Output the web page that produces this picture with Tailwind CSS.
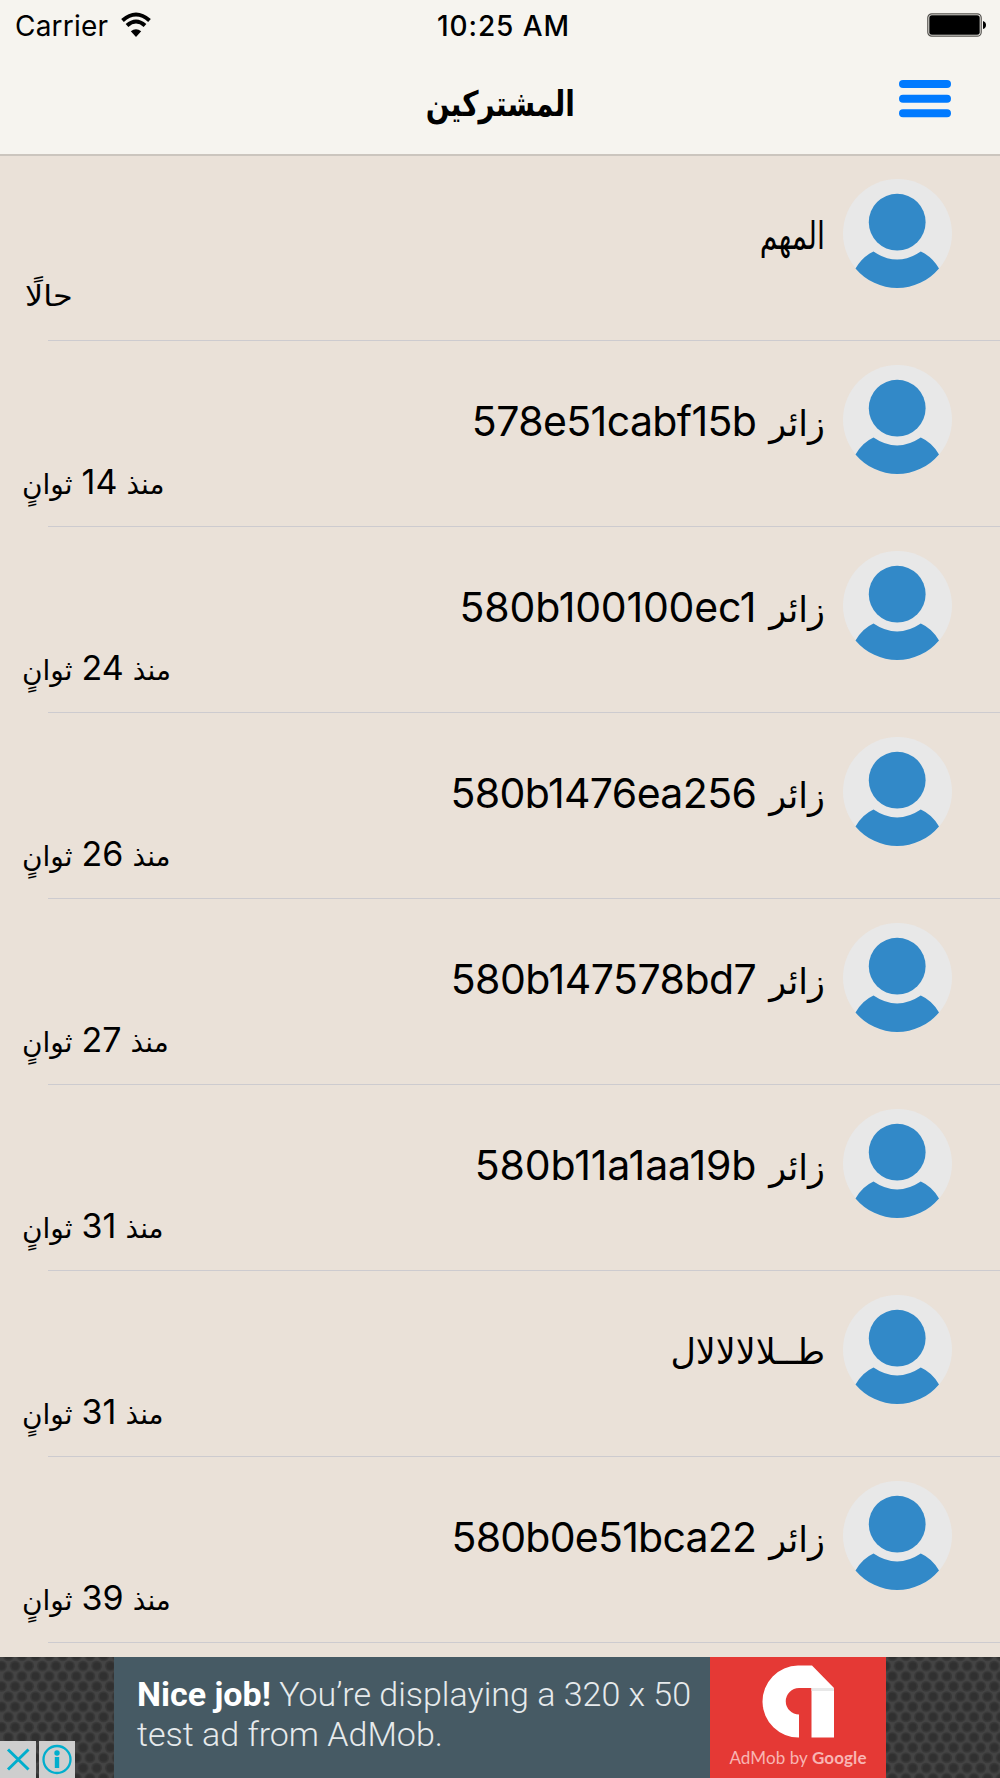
<!DOCTYPE html>
<html lang="ar">
<head>
    <meta charset="UTF-8">
    <meta name="viewport" content="width=device-width, initial-scale=1.0">
    <title>المشتركين</title>
    <script src="https://cdn.jsdelivr.net/npm/@tailwindcss/browser@4"></script>
</head>
<body class="bg-[#eae1d8] text-black font-['Inter','DejaVu_Sans',sans-serif]">
<div class="w-[1000px] h-[1778px] flex flex-col overflow-hidden">

    <!-- Status bar + navigation bar -->
    <header class="h-[156px] shrink-0 bg-[#f6f4ef] border-b-2 border-[#cbc5be]">
        <div class="h-[50px] grid grid-cols-3 items-center pl-[15px] pr-[13px] text-[28px]">
            <div class="flex items-center gap-[13px]">
                <span class="mt-[2px] tracking-[0.2px]">Carrier</span>
                <svg class="w-[30px] h-[25px] -mt-[2px]" viewBox="0 0 30 25">
                    <path d="M1.500 8.500Q15-3.500 28.500 8.500" fill="none" stroke="#000" stroke-width="4"/>
                    <path d="M6 13.500Q15 5.500 24 13.500" fill="none" stroke="#000" stroke-width="4"/>
                    <path d="M15 25L9.800 19.300Q15 15 20.200 19.300Z"/>
                </svg>
            </div>
            <span class="mt-[2px] pl-[5px] text-center font-medium whitespace-nowrap text-[28px] tracking-[0.9px]">10:25 AM</span>
            <svg class="w-[60px] h-[24px] justify-self-end" viewBox="0 0 60 24">
                <rect x=".8" y=".8" width="53.400" height="22.400" rx="4" fill="none" stroke="#55534f" stroke-width="1.200"/>
                <rect x="2.300" y="2.300" width="50.400" height="19.400" rx="2.500"/>
                <path d="M56 8Q59 9 59 12T56 16Z"/>
            </svg>
        </div>
        <div class="h-[104px] grid grid-cols-[1fr_auto_1fr] pl-[49px] pr-[49px]">
            <span></span>
            <h1 dir="rtl" class="mt-[29px] text-[35px] leading-[50px] font-bold font-['DejaVu_Sans',sans-serif] scale-x-[.8]">المشتركين</h1>
            <svg class="w-[52px] h-[38px] mt-[30px] justify-self-end" viewBox="0 0 52 38">
                <g fill="#007aff">
                    <rect width="52" height="8" rx="4"/>
                    <rect y="14.700" width="52" height="8" rx="4"/>
                    <rect y="29.200" width="52" height="8" rx="4"/>
                </g>
            </svg>
        </div>
    </header>

    <!-- Subscribers -->
    <ul id="subscribers" dir="rtl" class="h-[1502px] -mt-px shrink-0 overflow-hidden"></ul>

    <!-- Ad banner -->
    <footer class="relative h-[121px] shrink-0 flex justify-center bg-[#3b3b3b]">
        <svg class="absolute inset-0 w-full h-full">
            <defs>
                <pattern id="mesh" width="13.600" height="20.400" patternUnits="userSpaceOnUse">
                    <rect width="13.600" height="20.400" fill="#444"/>
                    <g fill="#383838">
                        <circle cx="1.500" cy="9" r="5.400"/>
                        <circle cx="15.100" cy="9" r="5.400"/>
                        <circle cx="8.300" cy="19.200" r="5.400"/>
                        <circle cx="8.300" cy="-1.200" r="5.400"/>
                    </g>
                    <g fill="#303030">
                        <circle cx="1.500" cy="9" r="3.800"/>
                        <circle cx="15.100" cy="9" r="3.800"/>
                        <circle cx="8.300" cy="19.200" r="3.800"/>
                        <circle cx="8.300" cy="-1.200" r="3.800"/>
                    </g>
                </pattern>
            </defs>
            <rect width="1000" height="121" fill="url(#mesh)"/>
        </svg>
        <div class="relative w-[596px] bg-[#465a64] pl-[23px] pt-[17px] text-[#e6eaec] text-[34px] leading-[40px] font-light font-['Roboto',sans-serif] whitespace-nowrap">
            <p><b class="font-bold text-white">Nice job!</b> You’re displaying a 320 x 50</p>
            <p>test ad from AdMob.</p>
        </div>
        <div class="relative w-[176px] bg-[#e53935] flex flex-col items-center">
            <svg class="w-[72px] h-[73px] mt-[8px]" viewBox="0 0 72 73">
                <path d="M36 .5H50L72 23V72.500H49.500V23H37A13 13 0 0 0 37 49.500V72.500A36 36 0 0 1 36 .5Z" fill="#fff"/>
                <path d="M49.500 23H72V26H49.500Z" fill="#e8e8e8"/>
            </svg>
            <span class="mt-[8px] text-[17px] leading-[24px] tracking-[0.1px] text-[#f8b5b3] font-['Lato',sans-serif] whitespace-nowrap">AdMob by <b class="font-bold">Google</b></span>
        </div>
        <div class="absolute left-0 bottom-0 flex gap-[3px]">
            <svg class="w-[36px] h-[37px] bg-[#cecece]" viewBox="0 0 36 37">
                <path d="M8 8.500L28.500 28.500M28.500 8.500L8 28.500" stroke="#00aecd" stroke-width="3"/>
            </svg>
            <svg class="w-[36px] h-[37px] bg-[#cecece]" viewBox="0 0 36 37">
                <circle cx="18" cy="18.500" r="13.500" fill="none" stroke="#00aecd" stroke-width="2.300"/>
                <circle cx="18" cy="12" r="2.700" fill="#00aecd"/>
                <path d="M15.800 16H20.200V27H15.800Z" fill="#00aecd"/>
            </svg>
        </div>
    </footer>
</div>

<script>
    const subscribers = [
        { name: 'المهم', style: 'text-[38px] scale-x-[.75]' },
        { id: '578e51cabf15b', seconds: 14, style: 'tracking-[-0.6px]' },
        { id: '580b100100ec1', seconds: 24, style: 'tracking-[-0.2px]' },
        { id: '580b1476ea256', seconds: 26, style: 'tracking-[-0.6px]' },
        { id: '580b147578bd7', seconds: 27, style: 'tracking-[-0.5px]' },
        { id: '580b11a1aa19b', seconds: 31, style: 'tracking-[-0.1px]' },
        { name: 'طــلالالالال', seconds: 31, style: 'text-[35px]' },
        { id: '580b0e51bca22', seconds: 39, style: 'tracking-[-0.75px]' },
        {},
    ];

    const avatar = `
        <svg class="w-[109px] h-[109px] shrink-0" viewBox="0 0 109 109">
            <circle cx="54.500" cy="54.500" r="54.500" fill="#e8e8e8"/>
            <circle cx="54.200" cy="43.200" r="28.400" fill="#3289c8"/>
            <path d="M30.500 72.600Q54 88.500 77.800 72.600Q89 77.500 96 89.500A54.500 54.500 0 0 1 12.500 89.500Q19.500 77.500 30.500 72.600Z" fill="#3289c8"/>
        </svg>`;

    const label = (s) => s.id
        ? `<span class="text-[35px]">زائر</span><span dir="ltr" class="text-[41px] ${s.style}">${s.id}</span>`
        : `<span class="origin-right ${s.style || ''}">${s.name || ''}</span>`;

    const time = (s) => s.seconds
        ? `<span class="text-[28px]">منذ</span><span class="text-[34px]">${s.seconds}</span><span class="text-[28px]">ثوانٍ</span>`
        : `<span class="text-[29px] origin-left scale-x-[1.1] ml-[3px]">${s.name ? 'حالًا' : ''}</span>`;

    document.getElementById('subscribers').innerHTML = subscribers.map((s) => `
        <li class="h-[186px] flex flex-col">
            <div class="flex pr-[48px] pt-[24px]">
                ${avatar}
                <div class="flex items-baseline gap-[13px] mr-[18px] mt-[26px] h-[60px] leading-[60px] whitespace-nowrap">${label(s)}</div>
            </div>
            <div dir="rtl" class="flex justify-end items-baseline gap-[9px] pl-[22px] -mt-[17px] h-[69px] leading-[50px] whitespace-nowrap">${time(s)}</div>
            <div class="ml-[48px] h-px bg-[#cdcbcf]"></div>
        </li>`).join('');
</script>
</body>
</html>
